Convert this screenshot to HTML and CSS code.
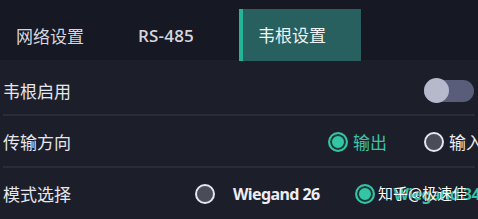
FILE: index.html
```html
<!DOCTYPE html>
<html lang="zh-CN">
<head>
<meta charset="utf-8">
<title>韦根设置</title>
<link rel="stylesheet" href="styles.css">
</head>
<body>
<div class="page">
  <div class="tabs">
    <div class="tab tab-net">网络设置</div>
    <div class="tab tab-rs">RS-485</div>
    <div class="tab tab-active">韦根设置</div>
  </div>
  <div class="content">
    <div class="row row-1">
      <div class="label">韦根启用</div>
      <div class="toggle"><span class="knob"></span></div>
    </div>
    <div class="sep"></div>
    <div class="row row-2">
      <div class="label">传输方向</div>
      <div class="options options-dir">
        <div class="opt opt-on"><span class="radio on"></span><span class="opt-text">输出</span></div>
        <div class="opt"><span class="radio"></span><span class="opt-text">输入</span></div>
      </div>
    </div>
    <div class="sep"></div>
    <div class="row row-3">
      <div class="label">模式选择</div>
      <div class="options options-mode">
        <div class="opt"><span class="radio"></span><span class="opt-text bold">Wiegand 26</span></div>
        <div class="opt opt-on"><span class="radio on"></span><span class="opt-text bold">Wiegand 34</span></div>
      </div>
      <div class="watermark">知乎@极速佳</div>
    </div>
  </div>
</div>
</body>
</html>
```

FILE: styles.css
```css
html, body {
  margin: 0;
  padding: 0;
}
body {
  width: 478px;
  height: 219px;
  overflow: hidden;
  background: #1c1f2a;
  font-family: "Noto Sans CJK SC", "Noto Sans", sans-serif;
  color: #e4e4ec;
}
.page {
  width: 478px;
  height: 219px;
  overflow: hidden;
}
.tabs {
  height: 60px;
  background: #161923;
  display: flex;
  align-items: flex-start;
  padding-left: 16px;
}
.tab {
  font-size: 17px;
  line-height: 20px;
  color: #d4d5de;
  margin-top: 26px;
  white-space: nowrap;
}
.tab-rs {
  margin-left: 54px;
  font-family: "Open Sans", "Noto Sans", sans-serif;
  font-weight: 600;
  font-size: 17px;
  letter-spacing: 0.2px;
}
.tab-active {
  margin-left: 45px;
  margin-top: 9px;
  height: 52px;
  box-sizing: border-box;
  width: 122px;
  padding: 16px 0 0 15px;
  background: #27605f;
  border-left: 4px solid #24b597;
  box-shadow: 1px 0 0 #14161d;
  color: #eef3f3;
}
.content {
  margin: 0 3px 0 3px;
}
.row {
  display: flex;
  align-items: center;
  position: relative;
  box-sizing: border-box;
}
.row-1 {
  height: 54px;
  padding-top: 8px;
}
.row-2 {
  height: 50px;
  padding-top: 2px;
}
.row-3 {
  height: 51px;
}
.label {
  font-size: 17px;
  line-height: 20px;
  color: #e6e6ee;
  flex: none;
  width: 68px;
  white-space: nowrap;
}
.sep {
  height: 2px;
  background: #2a2d39;
}
.toggle {
  margin-left: auto;
  margin-right: 1px;
  width: 50px;
  height: 22px;
  border-radius: 11px;
  background: #595d7a;
  position: relative;
}
.knob {
  position: absolute;
  left: 0;
  top: -2px;
  width: 25px;
  height: 25px;
  border-radius: 50%;
  background: #b6b8cc;
}
.options {
  display: flex;
  align-items: center;
  flex: none;
  white-space: nowrap;
}
.options-dir {
  margin-left: 257px;
  gap: 37px;
}
.options-mode {
  margin-left: 124px;
  gap: 36px;
}
.opt {
  display: flex;
  align-items: center;
}
.options-dir .opt {
  gap: 5px;
}
.options-mode .opt {
  gap: 18px;
}
.radio {
  width: 20px;
  height: 20px;
  box-sizing: border-box;
  border-radius: 50%;
  border: 2px solid #e6e6ee;
  background: #4a4c57;
  flex: none;
}
.radio.on {
  border-color: #36c2a4;
  background: #34c5a5;
  box-shadow: inset 0 0 0 2px #1c3a38;
}
.opt-text {
  font-size: 17px;
  line-height: 20px;
  color: #ececf2;
}
.opt-on .opt-text {
  color: #3cc3a6;
}
.bold {
  font-family: "Noto Sans", sans-serif;
  font-weight: 700;
  font-size: 16px;
  letter-spacing: -0.6px;
}
.watermark {
  position: absolute;
  left: 375px;
  top: 15px;
  font-size: 15px;
  line-height: 20px;
  color: #ffffff;
  text-shadow: 0 0 1px rgba(0,0,0,0.6);
  white-space: nowrap;
}
```
